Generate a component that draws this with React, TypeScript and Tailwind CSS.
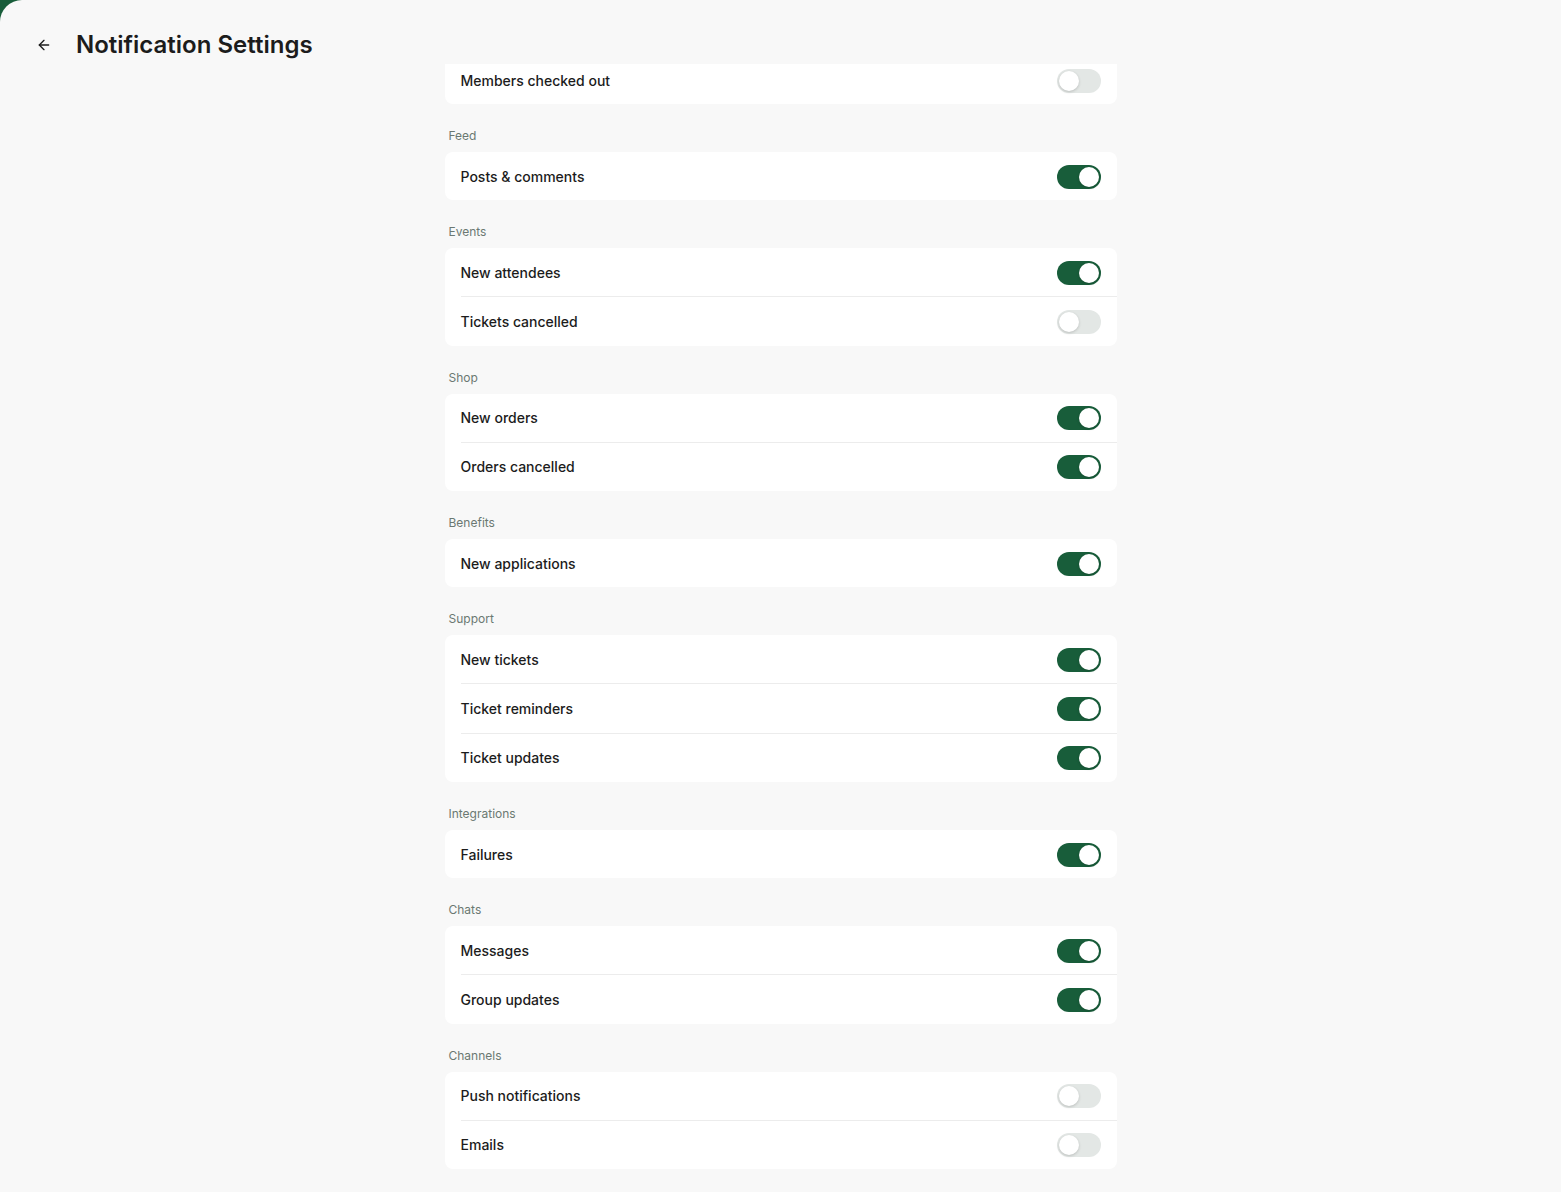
import { useEffect, useRef } from "react";
import { ArrowLeft } from "lucide-react";

type Row = { label: string; on: boolean };
type Section = { title: string; rows: Row[] };

const sections: Section[] = [
  { title: "", rows: [{ label: "Members checked out", on: false }] },
  { title: "Feed", rows: [{ label: "Posts & comments", on: true }] },
  {
    title: "Events",
    rows: [
      { label: "New attendees", on: true },
      { label: "Tickets cancelled", on: false },
    ],
  },
  {
    title: "Shop",
    rows: [
      { label: "New orders", on: true },
      { label: "Orders cancelled", on: true },
    ],
  },
  { title: "Benefits", rows: [{ label: "New applications", on: true }] },
  {
    title: "Support",
    rows: [
      { label: "New tickets", on: true },
      { label: "Ticket reminders", on: true },
      { label: "Ticket updates", on: true },
    ],
  },
  { title: "Integrations", rows: [{ label: "Failures", on: true }] },
  {
    title: "Chats",
    rows: [
      { label: "Messages", on: true },
      { label: "Group updates", on: true },
    ],
  },
  {
    title: "Channels",
    rows: [
      { label: "Push notifications", on: false },
      { label: "Emails", on: false },
    ],
  },
];

function Toggle({ on }: { on: boolean }) {
  return (
    <div
      className={
        on
          ? "flex h-6 w-11 items-center justify-end rounded-full bg-[#185d3a] p-[2px]"
          : "flex h-6 w-11 items-center justify-start rounded-full bg-[#e3e7e5] p-[2px]"
      }
    >
      <div className="h-5 w-5 rounded-full bg-white shadow-[0_1px_3px_rgba(0,0,0,0.18)]" />
    </div>
  );
}

export default function App() {
  const scrollRef = useRef<HTMLDivElement>(null);

  // list is shown scrolled a little, first card tucked under the header
  useEffect(() => {
    if (scrollRef.current) scrollRef.current.scrollTop = 8;
  }, []);

  return (
    <div className="h-screen bg-[#185d3a] font-['Inter',sans-serif]">
      <div className="flex h-full flex-col rounded-tl-[22px] bg-[#f8f8f8]">
        {/* Header */}
        <div className="flex h-16 shrink-0 items-center gap-[24px] pl-[36px] pt-[25px]">
          <ArrowLeft size={16} strokeWidth={2} className="text-[#1c1c1c]" />
          <h1 className="text-2xl font-semibold text-[#1c1c1c]">Notification Settings</h1>
        </div>

        {/* Settings list */}
        <div ref={scrollRef} className="flex-1 overflow-hidden">
          <div className="mx-auto max-w-2xl pb-10">
            {sections.map((s, si) => (
              <div key={s.title || si}>
                {s.title && (
                  <div className="px-1 pb-2 pt-6 text-xs leading-4 text-[#6b7872]">{s.title}</div>
                )}
                <div className="rounded-lg bg-white pl-4">
                  {s.rows.map((r, ri) => (
                    <div
                      key={r.label}
                      className={
                        ri === 0
                          ? "flex h-12 items-center justify-between pr-4 pt-px"
                          : "flex h-[49.5px] items-center justify-between border-t border-[#ececec] pr-4 pt-px"
                      }
                    >
                      <span className="text-sm font-medium text-[#1c1c1c]">{r.label}</span>
                      <Toggle on={r.on} />
                    </div>
                  ))}
                </div>
              </div>
            ))}
          </div>
        </div>
      </div>
    </div>
  );
}
